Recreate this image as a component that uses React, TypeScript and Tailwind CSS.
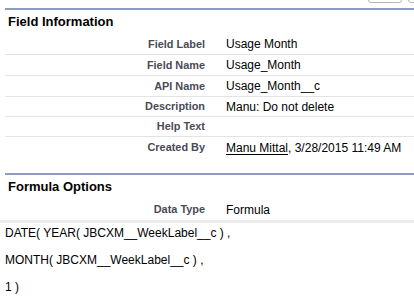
const FIELDS: { label: string; value: React.ReactNode; h: string }[] = [
  { label: 'Field Label', value: 'Usage Month', h: 'h-[21px]' },
  { label: 'Field Name', value: 'Usage_Month', h: 'h-[21px]' },
  { label: 'API Name', value: 'Usage_Month__c', h: 'h-[21px]' },
  { label: 'Description', value: 'Manu: Do not delete', h: 'h-[20px]' },
  { label: 'Help Text', value: '', h: 'h-[20px]' },
  {
    label: 'Created By',
    value: (
      <>
        <span className="underline underline-offset-2">Manu Mittal</span>, 3/28/2015 11:49 AM
      </>
    ),
    h: 'h-[21px]',
  },
];

function Row({ label, value, h, last }: { label: string; value: React.ReactNode; h: string; last?: boolean }) {
  return (
    <div className={`flex items-center ${h} ${last ? '' : 'border-b border-[#e3e3e3]'}`}>
      <div className="w-[200px] shrink-0 text-right text-[10.9px] font-bold text-[#4a4a56]">{label}</div>
      <div className="pl-[21px] text-[12px] text-black whitespace-nowrap">{value}</div>
    </div>
  );
}

function Section({ title, children }: { title: string; children: React.ReactNode }) {
  return (
    <div className="ml-[5px] border-t-2 border-[#8e9dbe]">
      <div className="h-[24px] leading-[24px] pl-[3px] text-[13px] font-bold text-black">{title}</div>
      {children}
    </div>
  );
}

export default function App() {
  return (
    <div className="w-[414px] h-[306px] overflow-hidden bg-white" style={{ fontFamily: '"Liberation Sans", Arial, sans-serif' }}>
      {/* cut-off buttons at the top */}
      <div className="h-[8px] overflow-hidden flex justify-end gap-[6px]">
        <div className="w-[34px] h-[20px] -mt-[17px] rounded-[3px] border border-[#b5b5b5] ml-auto" />
        <div className="w-[20px] h-[20px] -mt-[17px] rounded-[3px] border border-[#b5b5b5] -mr-[14px]" />
      </div>

      <Section title="Field Information">
        {FIELDS.map((f, i) => (
          <Row key={f.label} label={f.label} value={f.value} h={f.h} last={i === FIELDS.length - 1} />
        ))}
      </Section>

      <div className="h-[15px]" />

      <Section title="Formula Options">
        <Row label="Data Type" value="Formula" h="h-[21px]" last />
      </Section>
      <div className="h-[3px] bg-[#ececec]" />

      <div className="pl-[5px] text-[12px] text-black leading-[14px]">
        <div className="mt-[3px]">DATE( YEAR( JBCXM__WeekLabel__c ) ,</div>
        <div className="mt-[13px]">MONTH( JBCXM__WeekLabel__c ) ,</div>
        <div className="mt-[13px]">1 )</div>
      </div>
    </div>
  );
}
